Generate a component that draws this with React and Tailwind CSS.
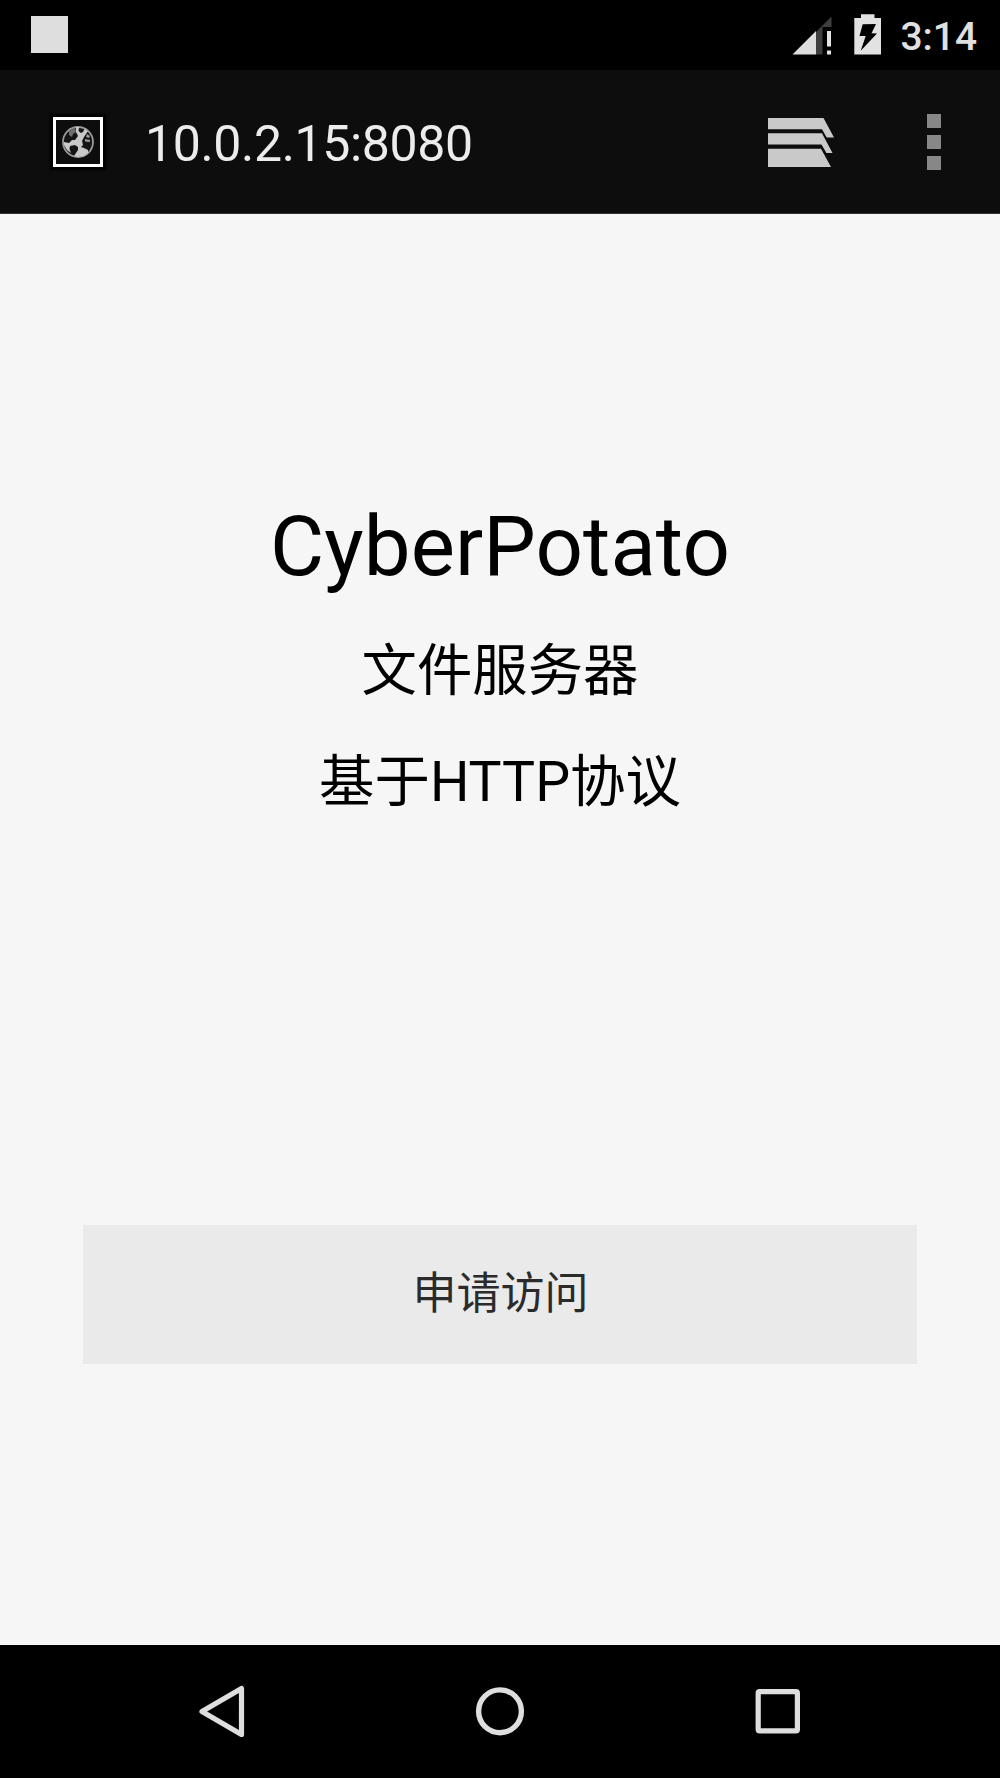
import React from "react";

function SignalIcon() {
  return (
    <svg className="w-10 h-10" viewBox="0 0 40 40">
      <path d="M24 16 L39.5 0.5 V11 H30.5 V38.5 H24 Z" fill="#3f3f3f" />
      <path d="M0.5 38.5 L24 15 V38.5 Z" fill="#dedede" />
      <path d="M35 15 H39 V30.5 H35 Z M35 34.5 H39 V38.5 H35 Z" fill="#e4e4e4" />
    </svg>
  );
}

function BatteryIcon() {
  return (
    <svg className="w-7 h-[41px]" viewBox="0 0 28 41">
      <path
        fillRule="evenodd"
        fill="#e2e2e2"
        d="M7 0.3 H20.5 V4 H27 V40.5 H0.3 V4 H7 Z M8.7 10.2 L22 10 L17.5 19.2 L23 19.6 L6.7 36.7 L11.7 22 L5.5 22 Z"
      />
    </svg>
  );
}

function GlobeIcon() {
  return (
    <svg className="w-[34px] h-[34px]" viewBox="0 0 34 34">
      <circle cx="17" cy="17" r="15" fill="#141414" stroke="#999" strokeWidth="1.8" />
      <path d="M8 6 L14 3 L15 7 L12 9 L11 12 L8 10 Z" fill="#6f6f6f" />
      {/* main land mass */}
      <path
        d="M15 2 L18 2 L17.5 6 L20 8 L22 7 L23.5 4 L27 6 L25 9 L23 12 L21 16 L22 20 L20 22 L23 23 L27 25 L27 28 L23 31 L17 32 L13 31 L15 28 L17 25 L17 22 L14 20 L9 21 L8.5 24 L10 28 L6 25 L3 20 L3 17 L8 18 L11 15 L14 15 L17 11 L15 7 Z"
        fill="#c8c8c8"
      />
      <path d="M24 14 L29 15 L29 17 L24 16.5 Z M26 9 L29 11 L28 13 L25 12 Z" fill="#999" />
    </svg>
  );
}

function TabsIcon() {
  return (
    <svg className="w-[66px] h-[49px]" viewBox="0 0 66 49" fill="#c9c9c9">
      <path d="M0 0 H55.5 L66 19.6 H58.7 L54 11.2 H0 Z" />
      <path d="M0 15.2 H54 L64.5 35 H58.4 L53.5 26.5 H0 Z" />
      <path d="M0 30.7 H53 L63 49 H0 Z" />
    </svg>
  );
}

function StatusBar() {
  return (
    <div className="flex h-[70px] shrink-0 justify-between bg-black pl-[31px] pr-[23px]">
      <div className="mt-[16px] h-[37px] w-[37px] bg-[#dedede]" />
      <div className="flex items-start">
        <div className="mt-[16px] mr-[22px]">
          <SignalIcon />
        </div>
        <div className="mt-[14px] mr-[18px]">
          <BatteryIcon />
        </div>
        <span className="mt-[7px] text-[38.9px] leading-[60px] font-medium text-[#e0e0e0]">3:14</span>
      </div>
    </div>
  );
}

function AddressBar() {
  return (
    <div className="flex h-[144px] shrink-0 items-center border-b border-[#333] bg-[#0d0d0d] pl-[53px] pr-[59px]">
      <div className="flex h-[50px] w-[50px] items-center justify-center border-[3px] border-white bg-[#0d0d0d] shadow-[0_0_2px_3px_#000]">
        <GlobeIcon />
      </div>
      <span className="ml-[42px] pt-[4px] text-[50px] leading-[60px] tracking-[-0.35px] text-[#ececec]">
        10.0.2.15:8080
      </span>
      <div className="mt-[1px] ml-auto">
        <TabsIcon />
      </div>
      <div className="ml-[93px] flex flex-col gap-[7px]">
        <div className="h-[14px] w-[14px] bg-[#878787]" />
        <div className="h-[14px] w-[14px] bg-[#878787]" />
        <div className="h-[14px] w-[14px] bg-[#878787]" />
      </div>
    </div>
  );
}

function NavBar() {
  return (
    <div className="flex h-[133.5px] shrink-0 items-center justify-center gap-[229px] bg-black">
      <svg className="w-[50px] h-[54px]" viewBox="0 0 50 54" fill="none" stroke="#dedede">
        <path d="M45.5 4.5 V50.5 L6 27.5 Z" strokeWidth="5.2" strokeLinejoin="round" />
      </svg>
      <svg className="w-[50px] h-[54px]" viewBox="0 0 50 54" fill="none" stroke="#dedede">
        <circle cx="25" cy="27.3" r="21.4" strokeWidth="5.4" />
      </svg>
      <svg className="w-[50px] h-[54px]" viewBox="0 0 50 54" fill="none" stroke="#dedede">
        <rect x="4.2" y="7.7" width="39.2" height="39.2" rx="1.5" strokeWidth="5.2" />
      </svg>
    </div>
  );
}

const App = () => {
  return (
    <div className="flex h-[1778px] w-[1000px] flex-col overflow-hidden bg-[#f6f6f6] font-[Roboto,'Noto_Sans_CJK_SC',sans-serif]">
      <StatusBar />
      <AddressBar />
      <main className="flex flex-1 flex-col items-center pt-[277px] text-black">
        <h1 className="text-[83.33px] leading-[111px] tracking-[0.1px]">CyberPotato</h1>
        <p className="mt-[14px] text-[55.4px] leading-[111px]">文件服务器</p>
        <p className="text-[55.4px] leading-[111px]">基于HTTP协议</p>
        <button className="mt-[387px] h-[139px] w-[833.4px] bg-[#eaeaea] pb-[1px] pl-[1px] text-[44px] text-[#2b2b2b]">
          申请访问
        </button>
      </main>
      <NavBar />
    </div>
  );
};

export default App;
